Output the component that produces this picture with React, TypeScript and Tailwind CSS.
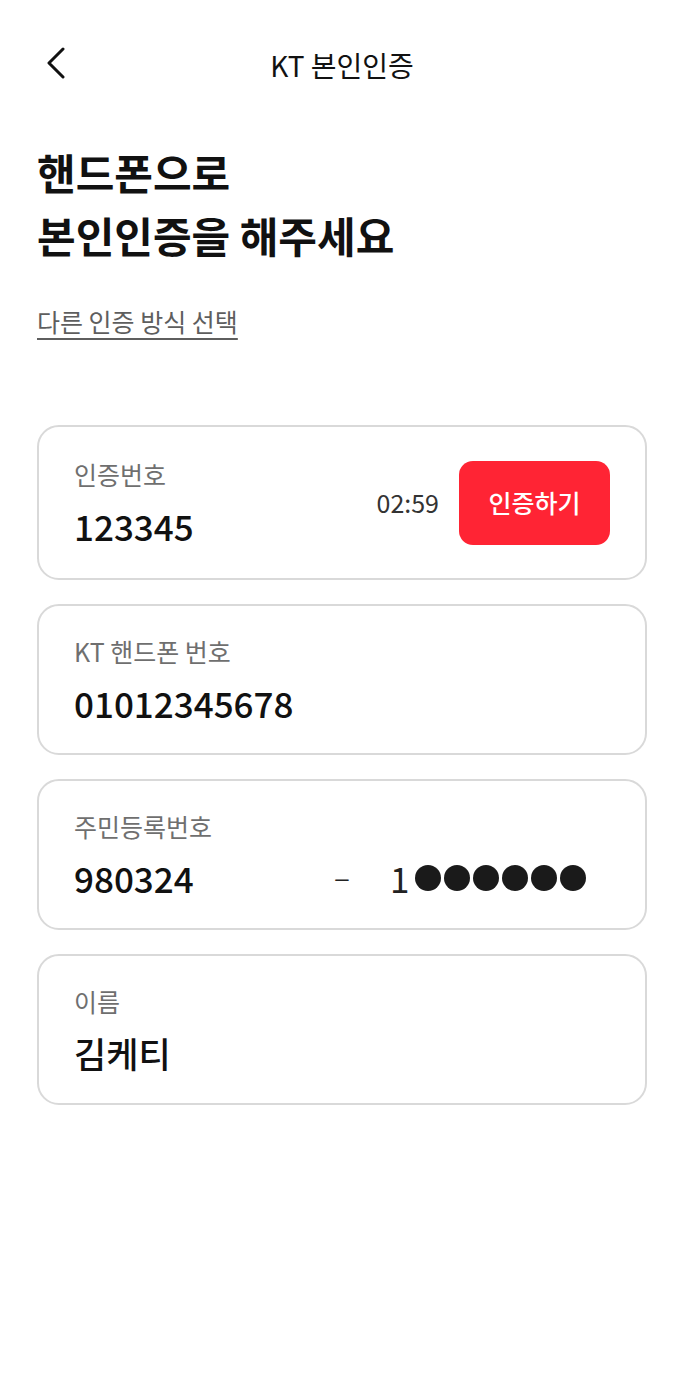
import React from 'react';

const font = { fontFamily: '"Noto Sans CJK KR", "Noto Sans", sans-serif' };

const Field: React.FC<{ label: string; tall?: boolean; children: React.ReactNode; right?: React.ReactNode }> = ({
  label,
  tall,
  children,
  right,
}) => {
  return (
    <div
      className={`flex items-center justify-between rounded-[22px] border-2 border-[#d9d9d9] bg-white pl-[35px] pr-[35px] ${
        tall ? 'h-[155px]' : 'h-[151px]'
      }`}
    >
      <div className="flex flex-col flex-1">
        <span className="text-[25px] leading-[32px] text-[#6f6f6f]">{label}</span>
        <div className="mt-[14px] text-[35px] leading-[44px] font-medium text-[#111]">
          {children}
        </div>
      </div>
      {right}
    </div>
  );
};

export default function App() {
  return (
    <div className="min-h-[1378px] w-full bg-white" style={font}>
      <header className="grid h-[130px] grid-cols-[1fr_auto_1fr] items-center">
        <button className="-mt-1 ml-[46px] flex w-[20px]">
          <svg width="20" height="32" viewBox="0 0 20 32" fill="none">
            <path d="M17 2 L3 16 L17 30" stroke="#111" strokeWidth="3" strokeLinecap="round" strokeLinejoin="round" />
          </svg>
        </button>
        <h1 className="text-[28px] font-normal text-[#111]">KT 본인인증</h1>
        <div />
      </header>

      <main className="px-[37px]">
        <h2 className="mt-[10px] text-[42px] leading-[63px] font-bold text-[#111]">
          핸드폰으로
          <br />
          본인인증을 해주세요
        </h2>

        <a className="mt-[37px] block w-fit text-[25px] leading-[36px] text-[#5e5e5e] underline decoration-[2px] underline-offset-[6px]">
          다른 인증 방식 선택
        </a>

        <div className="mt-[86px] flex flex-col gap-[24px]">
          <Field
            label="인증번호"
            tall
            right={
              <div className="flex items-center gap-[20px]">
                <span className="text-[25px] text-[#333]">02:59</span>
                <button className="h-[84px] w-[151px] rounded-[14px] bg-[#ff2434] text-[25px] font-medium text-white">
                  인증하기
                </button>
              </div>
            }
          >
            123345
          </Field>

          <Field label="KT 핸드폰 번호">01012345678</Field>

          <Field label="주민등록번호">
            <div className="flex items-center">
              <span className="w-[261px]">980324</span>
              <span
                className="w-[14px] text-center text-[24px] font-normal text-[#222]"
                style={{ fontFamily: '"Liberation Sans", sans-serif' }}
              >
                –
              </span>
              <span className="ml-[41px] font-normal text-[#222]">1</span>
              <div className="ml-[6px] flex gap-[3px]">
                {[0, 1, 2, 3, 4, 5].map((i) => (
                  <span key={i} className="block h-[26px] w-[26px] rounded-full bg-[#1a1a1a]" />
                ))}
              </div>
            </div>
          </Field>

          <Field label="이름">김케티</Field>
        </div>
      </main>
    </div>
  );
}
